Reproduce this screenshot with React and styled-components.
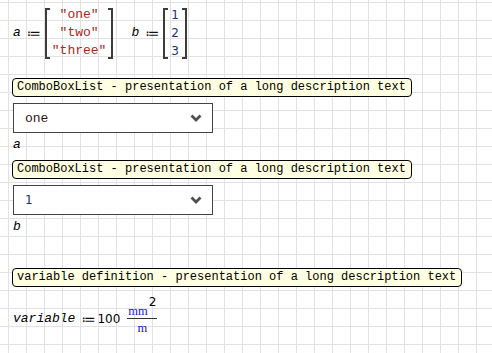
import styled, { createGlobalStyle } from "styled-components";

const GlobalStyle = createGlobalStyle`
  body {
    margin: 0;
    background: #fff;
  }
`;

const Sheet = styled.div`
  width: 492px;
  height: 353px;
  overflow: hidden;
  box-sizing: border-box;
  padding: 6px 0 0 12px;
  background-color: #fff;
  background-image: linear-gradient(#e2e2e2 1px, transparent 1px),
    linear-gradient(90deg, #e2e2e2 1px, transparent 1px);
  background-size: 18px 18px;
  background-position: 8px 2px;
  font-family: "Liberation Mono", monospace;
  color: #000;
`;

const MatrixRow = styled.div`
  display: flex;
  height: 56px;
  align-items: flex-start;
`;

const Definition = styled.div`
  display: flex;
  align-items: center;
  height: 54px;
  margin-right: ${(p) => p.$gap || 0}px;
`;

const VarName = styled.span`
  font-family: "Liberation Mono", monospace;
  font-style: italic;
  font-size: 13px;
  line-height: 16px;
  padding-left: 1px;
  margin-right: 6px;
`;

const Assign = styled.span`
  font-family: "DejaVu Sans", sans-serif;
  font-size: 14px;
  line-height: 16px;
  margin-right: ${(p) => p.$after ?? 4}px;
  color: #111;
`;

const Matrix = styled.div`
  display: flex;
  align-self: stretch;
`;

const Bracket = styled.div`
  width: 3px;
  margin: 2px 0 1px;
  border: 2px solid #3c3c3c;
  ${(p) => (p.$side === "left" ? "border-right: none;" : "border-left: none;")}
`;

const Column = styled.div`
  display: flex;
  flex-direction: column;
  padding: 0 ${(p) => p.$pad}px;
`;

const Cell = styled.div`
  height: 18px;
  line-height: 18px;
  text-align: center;
  font-size: ${(p) => (p.$num ? 12 : 13)}px;
  font-family: ${(p) =>
    p.$num ? '"DejaVu Sans", sans-serif' : '"Liberation Mono", monospace'};
  color: ${(p) => (p.$num ? "#1b2f7a" : "#a8281c")};
`;

const Label = styled.div`
  width: fit-content;
  box-sizing: border-box;
  height: 19px;
  line-height: 17px;
  padding: 0 5px 0 4px;
  margin-top: ${(p) => p.$top}px;
  border: 1px solid #000;
  border-radius: 4px;
  background: #ffffe1;
  font-size: 12px;
  white-space: nowrap;
`;

const Combo = styled.div`
  width: 200px;
  height: 30px;
  box-sizing: border-box;
  margin: 6px 0 0 1px;
  border: 1px solid #444;
  background: #fff;
  display: flex;
  align-items: center;
  justify-content: space-between;
  padding: 0 10px 0 11px;
`;

const ComboValue = styled.span`
  font-family: ${(p) =>
    p.$num ? '"DejaVu Sans", sans-serif' : '"Liberation Mono", monospace'};
  font-size: ${(p) => (p.$num ? 12 : 13)}px;
  color: ${(p) => (p.$num ? "#1b2f7a" : "#2a1512")};
`;

const ResultLine = styled.div`
  height: 18px;
  line-height: 18px;
  margin-top: 3px;
  font-style: italic;
  font-size: 13px;
  padding-left: 1px;
`;

const UnitRow = styled.div`
  display: flex;
  align-items: center;
  margin-top: 9px;
`;

const Number = styled.span`
  font-family: "DejaVu Sans", sans-serif;
  font-size: 12px;
  line-height: 16px;
  margin-right: 7px;
`;

const Fraction = styled.div`
  display: flex;
  flex-direction: column;
  align-items: center;
`;

const Numerator = styled.div`
  display: flex;
  align-items: flex-end;
  padding: 0 1px;
`;

const Unit = styled.span`
  font-family: "Liberation Serif", serif;
  font-size: 12.5px;
  line-height: 14px;
  color: #1414e6;
`;

const Sup = styled.span`
  font-family: "DejaVu Sans", sans-serif;
  font-size: 12px;
  line-height: 12px;
  margin: 0 0 10px 1px;
`;

const Bar = styled.div`
  align-self: stretch;
  height: 1px;
  background: #333;
`;

const Denominator = styled.div`
  padding: 2px 0 6px;
  display: flex;
`;

const chevron = (
  <svg width="12" height="8" viewBox="0 0 12 8">
    <polyline
      points="1.5,1.5 6,6 10.5,1.5"
      fill="none"
      stroke="#505050"
      strokeWidth="2.8"
    />
  </svg>
);

export default function App() {
  return (
    <>
      <GlobalStyle />
      <Sheet>
        <MatrixRow>
          <Definition $gap={17}>
            <VarName>a</VarName>
            <Assign>≔</Assign>
            <Matrix>
              <Bracket $side="left" />
              <Column $pad={2}>
                <Cell>"one"</Cell>
                <Cell>"two"</Cell>
                <Cell>"three"</Cell>
              </Column>
              <Bracket $side="right" />
            </Matrix>
          </Definition>
          <Definition>
            <VarName>b</VarName>
            <Assign>≔</Assign>
            <Matrix>
              <Bracket $side="left" />
              <Column $pad={3}>
                <Cell $num>1</Cell>
                <Cell $num>2</Cell>
                <Cell $num>3</Cell>
              </Column>
              <Bracket $side="right" />
            </Matrix>
          </Definition>
        </MatrixRow>

        <Label $top={16}>ComboBoxList - presentation of a long description text</Label>
        <Combo>
          <ComboValue>one</ComboValue>
          {chevron}
        </Combo>
        <ResultLine>a</ResultLine>

        <Label $top={6}>ComboBoxList - presentation of a long description text</Label>
        <Combo>
          <ComboValue $num>1</ComboValue>
          {chevron}
        </Combo>
        <ResultLine>b</ResultLine>

        <Label $top={32}>variable definition - presentation of a long description text</Label>
        <UnitRow>
          <VarName>variable</VarName>
          <Assign $after={2}>≔</Assign>
          <Number>100</Number>
          <Fraction>
            <Numerator>
              <Unit>mm</Unit>
              <Sup>2</Sup>
            </Numerator>
            <Bar />
            <Denominator>
              <Unit>m</Unit>
            </Denominator>
          </Fraction>
        </UnitRow>
      </Sheet>
    </>
  );
}
